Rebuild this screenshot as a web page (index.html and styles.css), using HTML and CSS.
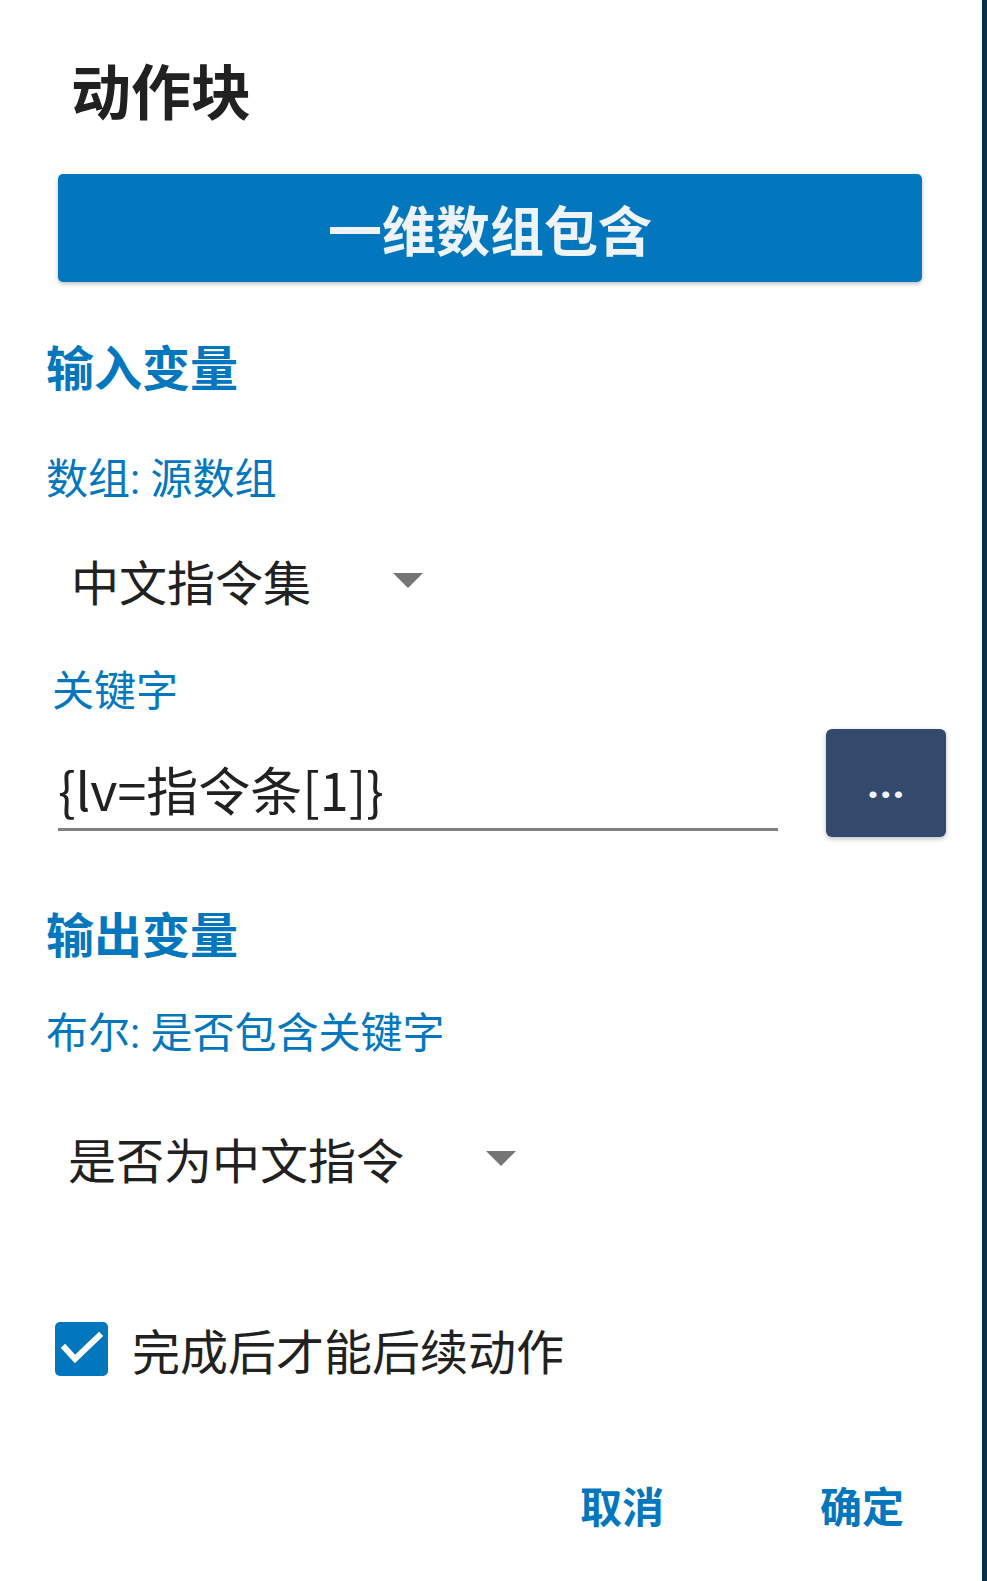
FILE: index.html
```html
<!DOCTYPE html>
<html lang="zh-CN">
<head>
  <meta charset="UTF-8">
  <meta name="viewport" content="width=device-width, initial-scale=1.0">
  <title>动作块</title>
  <link rel="stylesheet" href="styles.css">
</head>
<body>
  <div class="dialog">
    <h1 class="title">动作块</h1>

    <button class="block-name">一维数组包含</button>

    <!-- 输入变量 -->
    <h2 class="section">输入变量</h2>
    <div class="label">数组: 源数组</div>
    <div class="spinner">
      <span>中文指令集</span>
      <span class="arrow"></span>
    </div>

    <div class="label label-key">关键字</div>
    <div class="input-row">
      <div class="field">{lv=指令条[1]}</div>
      <button class="more">...</button>
    </div>

    <!-- 输出变量 -->
    <h2 class="section section-out">输出变量</h2>
    <div class="label label-out">布尔: 是否包含关键字</div>
    <div class="spinner spinner-out">
      <span>是否为中文指令</span>
      <span class="arrow"></span>
    </div>

    <label class="check-row">
      <span class="checkbox">
        <svg width="53" height="54" viewBox="0 0 53 54">
          <polyline points="10,26 20,37 44,14" fill="none" stroke="#fff" stroke-width="6" stroke-linecap="square"/>
        </svg>
      </span>
      <span>完成后才能后续动作</span>
    </label>

    <div class="actions">
      <button class="text-btn">取消</button>
      <button class="text-btn">确定</button>
    </div>
  </div>
</body>
</html>
```

FILE: styles.css
```css
html, body {
  margin: 0;
  height: 100%;
}
body {
  background-color: #06304a;
  font-family: Roboto, "Noto Sans CJK SC", sans-serif;
  color: #212121;
}
.dialog {
  width: 982px;
  min-height: 100%;
  background: white;
  padding-top: 60px;
  box-sizing: border-box;
}
button {
  font-family: inherit;
  border: none;
  cursor: pointer;
}
.title {
  margin: 0 0 0 71px;
  font-size: 60px;
  line-height: 70px;
  font-weight: bold;
  color: #212121;
}
.block-name {
  display: block;
  margin: 44px 0 0 58px;
  width: 864px;
  height: 108px;
  background-color: #0277bd;
  color: #eef3f7;
  font-size: 54px;
  font-weight: bold;
  border-radius: 5px;
  box-shadow: 0 2px 4px rgba(0,0,0,0.25);
}
.section {
  margin: 58px 0 0 46px;
  font-size: 48px;
  line-height: 60px;
  font-weight: bold;
  color: #0277bd;
}
.section-out {
  margin-top: 70px;
}
.label {
  margin: 55px 0 0 46px;
  font-size: 42px;
  line-height: 50px;
  color: #0277bd;
}
.label-key {
  margin: 47px 0 0 52px;
}
.label-out {
  margin-top: 42px;
}
.spinner {
  display: flex;
  align-items: center;
  margin: 35px 0 0 71px;
  height: 80px;
  font-size: 48px;
  color: #212121;
}
.spinner-out {
  margin: 59px 0 0 68px;
}
.arrow {
  margin-left: 82px;
  width: 0;
  height: 0;
  border-left: 15px solid transparent;
  border-right: 15px solid transparent;
  border-top: 15px solid #757575;
}
.input-row {
  display: flex;
  align-items: flex-start;
  margin: 12px 0 0 58px;
}
.field {
  width: 720px;
  height: 102px;
  box-sizing: border-box;
  padding-top: 30px;
  line-height: 60px;
  font-family: "Noto Sans CJK SC", sans-serif;
  font-size: 52px;
  color: #212121;
  border-bottom: 3px solid #808080;
}
.more {
  margin-left: 48px;
  width: 120px;
  height: 108px;
  background-color: #334a6d;
  color: #f2f4f7;
  font-size: 44px;
  font-weight: bold;
  border-radius: 6px;
  box-shadow: 0 2px 5px rgba(0,0,0,0.25);
}
.check-row {
  display: flex;
  align-items: center;
  margin: 121px 0 0 55px;
  height: 60px;
  font-size: 48px;
  color: #212121;
}
.checkbox {
  display: block;
  width: 53px;
  height: 54px;
  margin-right: 24px;
  background-color: #0277bd;
  border-radius: 5px;
}
.checkbox svg {
  display: block;
}
.actions {
  display: flex;
  justify-content: flex-end;
  gap: 156px;
  margin-top: 95px;
  padding-right: 78px;
}
.text-btn {
  background: none;
  padding: 0;
  height: 60px;
  font-size: 42px;
  font-weight: bold;
  color: #0277bd;
}
```
